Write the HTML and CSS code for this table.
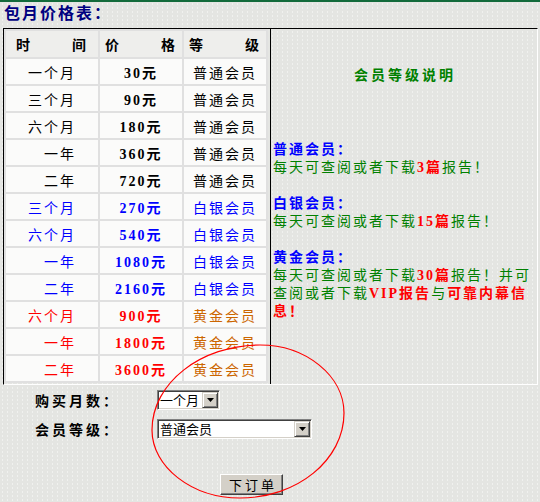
FILE: index.html
```html
<!DOCTYPE html>
<html lang="zh-CN">
<head>
<meta charset="utf-8">
<title>包月价格表</title>
<link rel="stylesheet" href="styles.css">
</head>
<body>
<div class="page">
  <h1 class="title">包月价格表：</h1>
  <div class="board">
    <div class="prices">
      <table class="price-table">
        <colgroup><col class="c-term"><col class="c-cost"><col class="c-level"></colgroup>
        <thead>
          <tr>
            <th><span class="hd"><span>时</span><span>间</span></span></th>
            <th><span class="hd"><span>价</span><span>格</span></span></th>
            <th><span class="hd"><span>等</span><span>级</span></span></th>
          </tr>
        </thead>
        <tbody>
          <tr><td class="term">一个月</td><td class="cost">30元</td><td class="level">普通会员</td></tr>
          <tr><td class="term">三个月</td><td class="cost">90元</td><td class="level">普通会员</td></tr>
          <tr><td class="term">六个月</td><td class="cost">180元</td><td class="level">普通会员</td></tr>
          <tr><td class="term">一年</td><td class="cost">360元</td><td class="level">普通会员</td></tr>
          <tr><td class="term">二年</td><td class="cost">720元</td><td class="level">普通会员</td></tr>
          <tr class="t-silver"><td class="term">三个月</td><td class="cost">270元</td><td class="level">白银会员</td></tr>
          <tr class="t-silver"><td class="term">六个月</td><td class="cost">540元</td><td class="level">白银会员</td></tr>
          <tr class="t-silver"><td class="term">一年</td><td class="cost">1080元</td><td class="level">白银会员</td></tr>
          <tr class="t-silver"><td class="term">二年</td><td class="cost">2160元</td><td class="level">白银会员</td></tr>
          <tr class="t-gold"><td class="term">六个月</td><td class="cost">900元</td><td class="level">黄金会员</td></tr>
          <tr class="t-gold"><td class="term">一年</td><td class="cost">1800元</td><td class="level">黄金会员</td></tr>
          <tr class="t-gold"><td class="term">二年</td><td class="cost">3600元</td><td class="level">黄金会员</td></tr>
        </tbody>
      </table>
    </div>
    <div class="notes">
      <h2 class="notes-title">会员等级说明</h2>
      <dl class="notes-list">
        <dt>普通会员：</dt>
        <dd>每天可查阅或者下载<b>3篇</b>报告！</dd>
        <dt>白银会员：</dt>
        <dd>每天可查阅或者下载<b>15篇</b>报告！</dd>
        <dt>黄金会员：</dt>
        <dd><span class="seg">每天可查阅或者下载</span><b>30篇</b><span class="seg">报告！并可</span><span class="seg">查阅或者下载</span><b>VIP报告</b><span class="seg">与</span><b>可靠内幕信</b><b>息！</b></dd>
      </dl>
    </div>
  </div>
  <form class="order" action="#">
    <label class="field-label" for="months">购买月数：</label>
    <div class="combo combo-short">
      <select id="months" name="months">
        <option>一个月</option><option>三个月</option><option>六个月</option><option>一年</option><option>二年</option>
      </select>
      <span class="combo-btn"><svg width="7" height="4" viewBox="0 0 7 4"><polygon points="0,0 7,0 3.5,4" fill="#000"/></svg></span>
    </div>
    <label class="field-label" for="level">会员等级：</label>
    <div class="combo combo-long">
      <select id="level" name="level">
        <option>普通会员</option><option>白银会员</option><option>黄金会员</option>
      </select>
      <span class="combo-btn"><svg width="7" height="4" viewBox="0 0 7 4"><polygon points="0,0 7,0 3.5,4" fill="#000"/></svg></span>
    </div>
    <button class="submit" type="submit">下订单</button>
  </form>
  <svg class="annotation" width="540" height="502" viewBox="0 0 540 502">
    <path d="M260,345 C306,345 344,376 344,413 C344,460 297,498 240,498 C192,498 152,467 152,430 C152,383 201,345 260,345 Z" fill="none" stroke="#ff0000" stroke-width="1.2"/>
  </svg>
</div>
</body>
</html>
```

FILE: styles.css
```css
* { box-sizing: border-box; }

html, body {
  margin: 0;
  padding: 0;
}

body {
  background: #e5e6e3;
  font-family: "Liberation Serif", "Noto Sans CJK SC", serif;
  font-size: 14px;
  color: #000;
}

.page {
  position: relative;
  width: 540px;
  height: 502px;
  overflow: hidden;
  border-top: 2px solid #136b3b;
  background-color: #e4e5e2;
  background-image: radial-gradient(circle, rgba(255, 255, 255, 0.45) 0.6px, transparent 1px);
  background-size: 5px 4px;
}

.title {
  margin: 0;
  height: 26px;
  padding-left: 4px;
  font-size: 16px;
  line-height: 24px;
  font-weight: bold;
  color: #000080;
  letter-spacing: 2px;
}

.board {
  display: flex;
  width: 535px;
  margin-left: 3px;
  border: 1px solid;
  border-color: #000 #fff #fff #000;
}

.prices {
  width: 266px;
  flex: none;
  padding-bottom: 1px;
}

.price-table {
  width: 264px;
  table-layout: fixed;
  border-collapse: separate;
  border-spacing: 2px;
  background: #e0e0e0;
  font-size: 14px;
  letter-spacing: 2px;
}

.c-term { width: 92px; }
.c-cost { width: 82px; }
.c-level { width: 82px; }

.price-table th {
  height: 26px;
  padding: 0;
  background: #eeeeec;
  font-weight: bold;
}

.hd {
  display: flex;
  justify-content: center;
  gap: 40px;
}

.price-table td {
  height: 25px;
  padding: 0;
  background: #fbfbfa;
  text-align: center;
  white-space: nowrap;
}

.price-table td.term {
  text-align: right;
  padding-right: 22px;
}

.price-table td.cost {
  font-weight: bold;
}

.t-silver td { color: #0000ff; }
.t-gold td { color: #ff0000; }
.t-gold td.level { color: #cc6600; }

.notes {
  flex: 1;
  border-left: 1px solid #000;
  padding-left: 2px;
}

.notes-title {
  margin: 38px 0 56px;
  text-align: center;
  font-size: 14px;
  line-height: 18px;
  font-weight: bold;
  color: #008000;
  letter-spacing: 3px;
}

.notes-list {
  margin: 0;
  font-size: 14px;
  line-height: 18px;
  letter-spacing: 2px;
}

.notes-list dt {
  color: #0000ff;
  font-weight: bold;
}

.notes-list dd {
  margin: 0 0 18px;
  color: #008000;
}

.notes-list b {
  display: inline-block;
  color: #ff0000;
  line-height: 18px;
}

.notes-list .seg {
  display: inline-block;
  line-height: 18px;
}

.order {
  display: grid;
  grid-template-columns: 157px auto;
  row-gap: 9px;
  align-items: center;
  justify-items: start;
  margin: 0;
  padding-top: 5px;
}

.field-label {
  padding-left: 35px;
  font-weight: bold;
  font-size: 14px;
  letter-spacing: 3px;
}

.combo {
  display: flex;
  height: 20px;
  padding: 1px;
  background: #fff;
  border: 1px solid;
  border-color: #808080 #fff #fff #808080;
  box-shadow: inset 1px 1px #404040, inset -1px -1px #d4d0c8;
}

.combo-short { width: 63px; }
.combo-long { width: 155px; }

.combo select {
  -webkit-appearance: none;
  appearance: none;
  flex: 1;
  min-width: 0;
  height: 16px;
  margin: 0;
  padding: 0 0 0 1px;
  border: 0;
  outline: none;
  background: transparent;
  color: #000;
  font: 13px/16px "Noto Sans CJK SC", sans-serif;
}

.combo-btn {
  flex: none;
  width: 16px;
  height: 16px;
  display: flex;
  align-items: center;
  justify-content: center;
  background: #d4d0c8;
  border: 1px solid;
  border-color: #d4d0c8 #404040 #404040 #d4d0c8;
  box-shadow: inset 1px 1px #fff, inset -1px -1px #808080;
}

.submit {
  grid-column: 1 / -1;
  margin: 26px 0 0 220px;
  width: 63px;
  height: 21px;
  padding: 0 0 0 3px;
  background: #d4d0c8;
  border: 1px solid;
  border-color: #fff #404040 #404040 #fff;
  box-shadow: inset -1px -1px #808080;
  color: #000;
  font: 13px "Noto Sans CJK SC", sans-serif;
  letter-spacing: 3px;
}

.annotation {
  position: absolute;
  left: 0;
  top: -2px;
  pointer-events: none;
}
```
